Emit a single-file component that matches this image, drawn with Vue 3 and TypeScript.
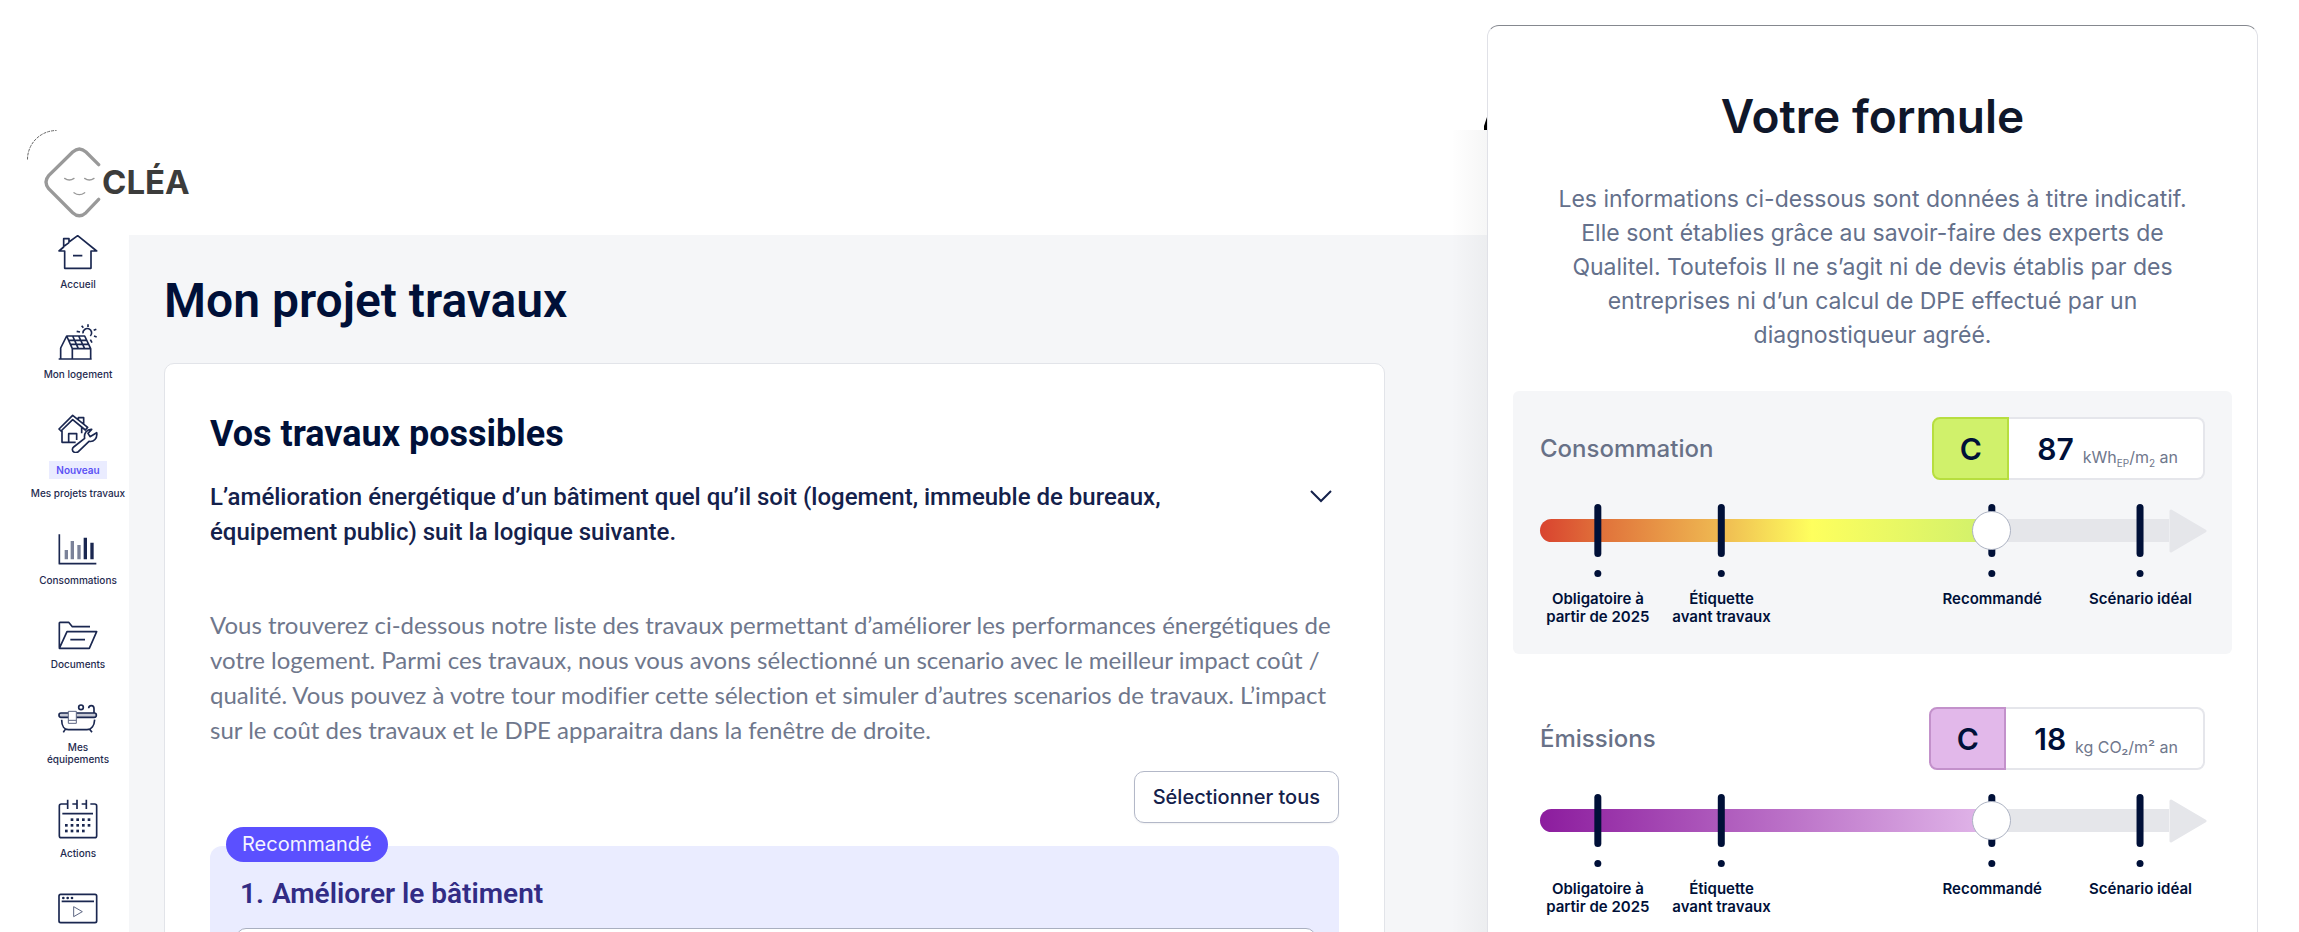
<script setup lang="ts">
import { ref } from 'vue'

interface Marker {
  at: number
  label: string
}

interface Gauge {
  id: string
  title: string
  grade: string
  value: number
  tone: 'green' | 'violet'
  muted: boolean
}

const markers: Marker[] = [
  { at: 8.7, label: 'Obligatoire à\npartir de 2025' },
  { at: 27.3, label: 'Étiquette\navant travaux' },
  { at: 68, label: 'Recommandé' },
  { at: 90.3, label: 'Scénario idéal' },
]

const gauges: Gauge[] = [
  { id: 'consommation', title: 'Consommation', grade: 'C', value: 87, tone: 'green', muted: true },
  { id: 'emissions', title: 'Émissions', grade: 'C', value: 18, tone: 'violet', muted: false },
]

const positions = ref<Record<string, number>>({ consommation: 69, emissions: 69 })

const calendarDots: [number, number][] = [
  ...[217, 234, 251, 268].map((x): [number, number] => [x, 506]),
  ...[200, 217, 234, 251, 268].map((x): [number, number] => [x, 523]),
  ...[200, 217, 234, 251].map((x): [number, number] => [x, 540]),
]
</script>

<template>
  <div class="page">
    <div class="window">
      <svg class="corner" viewBox="0 0 30 30" aria-hidden="true">
        <path d="M.5 29.5A29 29 0 0 1 29.5 .5" />
      </svg>
      <svg class="sliver" viewBox="0 0 3 13" aria-hidden="true"><path d="M3 0V13H0V9Z" /></svg>

      <header class="header">
        <a class="logo" href="#">
          <svg class="logo-mark" viewBox="132 108 171 216" aria-hidden="true">
            <path class="frame" d="M296 164L258 126Q238 108 218 126L146 197Q130 216 146 236L218 308Q238 326 258 308L296 268" />
            <path class="face" d="M194 205q14 10 28 0M254 205q14 10 28 0M222 248q16 12 32 0" />
          </svg>
          <span class="logo-name">CLÉA</span>
        </a>
      </header>

      <div class="columns">
        <nav class="sidebar">
          <a class="item" href="#">
            <svg class="icon" viewBox="175 375 120 105">
              <path d="M178 423L192 411V386H208V396L234 377L291 423H274V475H195V423ZM220 437H248M194 408L208 398" />
            </svg>
            <span class="label">Accueil</span>
          </a>
          <a class="item" href="#">
            <svg class="icon" viewBox="175 642 120 108">
              <path d="M177 747H276M183 747V714L201 678H255L273 716V747M218 747V716H273M201 678L218 716M207 691H261M212 703H267M219 678L236 716M237 678L255 716" />
              <path d="M250 670a13 13 0 1 1 22 8M265 643v8M246 647l5 6M290 658l-8 3M291 681l-8-3M231 664l10 2M277 698l-5-9" />
            </svg>
            <span class="label">Mon logement</span>
          </a>
          <a class="item" href="#">
            <svg class="icon" viewBox="175 102 120 117">
              <path d="M178 147L219 106L264 142L257 150L219 119L184 153ZM187 152V187H228M207 187V161H231V180M236 119V113H252V132M246 142V160" />
              <path class="paper" d="M224 217C216 213 217 205 222 201L255 175C252 160 262 147 276 148L265 160L271 170L291 158C294 175 282 187 268 184L240 211C236 217 230 219 224 217Z" />
            </svg>
            <span class="chip">Nouveau</span>
            <span class="label">Mes projets travaux</span>
          </a>
          <a class="item" href="#">
            <svg class="icon" viewBox="175 456 120 99">
              <path d="M179 460V548H290" />
              <path class="bar soft" d="M200 507V535M218 480V535M238 492V535" />
              <path class="bar" d="M257 470V535M277 485V535" />
            </svg>
            <span class="label">Consommations</span>
          </a>
          <a class="item" href="#">
            <svg class="icon" viewBox="175 717 120 90">
              <path d="M179 800V726Q179 724 181 724H207L218 737H271M179 802L202 752H291L269 802ZM212 776H256" />
            </svg>
            <span class="label">Documents</span>
          </a>
          <a class="item" href="#">
            <svg class="icon" viewBox="175 157 120 87">
              <rect class="rim" x="178" y="184" width="112" height="13" rx="6" />
              <path d="M186 204C186 224 195 234 206 234H262C275 234 284 222 285 204M196 234L191 242M271 234L277 242M283 184V171Q283 162 275 162Q267 162 267 170" />
              <rect class="paper thin" x="206" y="179" width="24" height="36" />
              <path class="thin" d="M206 206H230" />
              <circle cx="244" cy="167" r="7" />
            </svg>
            <span class="label">Mes<br>équipements</span>
          </a>
          <a class="item" href="#">
            <svg class="icon" viewBox="175 444 120 120">
              <path d="M194 459H185Q179 459 179 465V554Q179 560 185 560H285Q291 560 291 554V465Q291 459 285 459H272M204 446V474M232 446V474M260 446V474M194 459H204M218 459H232M246 459H260M188 488H280" />
              <rect v-for="([x, y], i) in calendarDots" :key="i" class="dot" :x="x - 4" :y="y - 4" width="8" height="8" />
            </svg>
            <span class="label">Actions</span>
          </a>
          <a class="item" href="#" aria-label="Vidéos">
            <svg class="icon" viewBox="175 724 120 93">
              <rect x="178" y="728" width="113" height="85" rx="5" />
              <path d="M186 749H283" />
              <path class="thin" d="M222 765V795L248 780Z" />
              <circle class="dot" cx="191" cy="739" r="4" />
              <circle class="dot" cx="204" cy="739" r="4" />
              <circle class="dot" cx="217" cy="739" r="4" />
            </svg>
          </a>
        </nav>

        <main class="main">
          <h1>Mon projet travaux</h1>
          <section class="card">
            <h2>Vos travaux possibles</h2>
            <div class="lead-row">
              <p class="lead">
                L’amélioration énergétique d’un bâtiment quel qu’il soit (logement, immeuble de bureaux,
                équipement public) suit la logique suivante.
              </p>
              <button class="toggle" type="button" aria-label="Déplier">
                <svg viewBox="0 0 24 16" aria-hidden="true"><path d="M2 3L12 13L22 3" /></svg>
              </button>
            </div>
            <p class="text">
              Vous trouverez ci-dessous notre liste des travaux permettant d’améliorer les performances
              énergétiques de votre logement. Parmi ces travaux, nous vous avons sélectionné un scenario avec le
              meilleur impact coût / qualité. Vous pouvez à votre tour modifier cette sélection et simuler
              d’autres scenarios de travaux. L’impact sur le coût des travaux et le DPE apparaitra dans la
              fenêtre de droite.
            </p>
            <button class="select-all" type="button">Sélectionner tous</button>
            <section class="group">
              <span class="badge">Recommandé</span>
              <h3><span>1.</span><span>Améliorer le bâtiment</span></h3>
              <div class="work"></div>
            </section>
          </section>
        </main>
      </div>
    </div>

    <aside class="panel">
      <h2 class="panel-title">Votre formule</h2>
      <p class="panel-text">
        Les informations ci-dessous sont données à titre indicatif. Elle sont établies grâce au savoir-faire des
        experts de Qualitel. Toutefois Il ne s’agit ni de devis établis par des entreprises ni d’un calcul de DPE
        effectué par un diagnostiqueur agréé.
      </p>

      <section v-for="g in gauges" :key="g.id" class="gauge" :class="[g.tone, { muted: g.muted }]">
        <div class="gauge-head">
          <label class="gauge-title" :for="g.id">{{ g.title }}</label>
          <div class="score">
            <strong class="grade">{{ g.grade }}</strong>
            <div class="measure">
              <strong class="number">{{ g.value }}</strong>
              <span v-if="g.tone === 'green'" class="unit">kWh<sub>EP</sub>/m<sub>2</sub> an</span>
              <span v-else class="unit">kg CO₂/m² an</span>
            </div>
          </div>
        </div>
        <div class="scale">
          <div class="track">
            <div class="rail"><div class="fill"></div></div>
            <svg class="arrow" viewBox="0 0 38 44" aria-hidden="true">
              <path d="M2 2L36 22L2 42Z" />
            </svg>
          </div>
          <div v-for="m in markers" :key="m.label" class="marker" :style="{ left: m.at + '%' }">
            <i class="tick"></i>
            <i class="point"></i>
            <span class="marker-label">{{ m.label }}</span>
          </div>
          <input :id="g.id" v-model.number="positions[g.id]" class="range" type="range" min="0" max="100">
        </div>
      </section>
    </aside>
  </div>
</template>

<style>
body {
  background: #fff;
}
</style>

<style scoped>
.page {
  box-sizing: border-box;
  display: flex;
  align-items: stretch;
  height: 100vh;
  overflow: hidden;
  padding: 25px 41px 0 27px;
  color: #001038;
  font-family: Inter, sans-serif;
}

h1, h2, h3, p {
  margin: 0;
}

a {
  color: inherit;
  text-decoration: none;
}

/* Application window */
.window {
  position: relative;
  display: flex;
  flex: 1;
  flex-direction: column;
  min-width: 0;
  margin-top: 105px;
}

.window::after {
  position: absolute;
  inset: 0 0 0 auto;
  width: 36px;
  background: linear-gradient(90deg, rgba(20, 24, 30, 0), rgba(20, 24, 30, 0.04));
  content: '';
  pointer-events: none;
}

.corner {
  position: absolute;
  top: 0;
  left: 0;
  width: 30px;
  fill: none;
  stroke: #666;
  stroke-dasharray: 3 1;
}

.sliver {
  position: absolute;
  top: -13px;
  right: 0;
  width: 3px;
}

.header {
  box-sizing: border-box;
  height: 105px;
  padding: 16px 17px;
}

.logo {
  display: inline-flex;
  gap: 1px;
  align-items: center;
}

.logo-mark {
  width: 57px;
  height: 72px;
  fill: none;
  stroke: #999;
  stroke-linecap: round;
}

.frame {
  stroke-width: 10;
}

.face {
  stroke-width: 4;
}

.logo-name {
  color: #3c3c3b;
  font-size: 33px;
  font-weight: 700;
  line-height: 40px;
}

.columns {
  display: flex;
  flex: 1;
}

.sidebar {
  display: flex;
  flex: 0 0 102px;
  flex-direction: column;
  gap: 34px;
}

.item {
  display: flex;
  flex-direction: column;
  gap: 8px;
  align-items: center;
}

.icon {
  width: 40px;
  fill: none;
  stroke: #1a2750;
  stroke-linejoin: round;
  stroke-width: 5;
}

.icon .thin {
  stroke: #5d6683;
  stroke-width: 3;
}

.icon .paper {
  fill: #fff;
}

.icon .rim {
  fill: #c6c9d4;
}

.icon .bar {
  stroke-width: 10;
}

.icon .soft {
  stroke: #7b8299;
}

.icon .dot {
  fill: #1a2750;
  stroke: none;
}

.label {
  color: #1f2b50;
  font-size: 10px;
  font-weight: 500;
  line-height: 12px;
  text-align: center;
  white-space: nowrap;
}

.chip {
  padding: 0 7px;
  background: #eaecff;
  color: #5a50f5;
  font-size: 10px;
  font-weight: 600;
  line-height: 18px;
}

.main {
  flex: 1;
  min-width: 0;
  padding: 38px 102px 0 35px;
  background: #f5f6f8;
  font-family: Roboto, sans-serif;
}

h1 {
  font-size: 48px;
  font-weight: 600;
  line-height: 56px;
}

.card {
  display: flex;
  flex-direction: column;
  height: 100%;
  margin-top: 34px;
  padding: 48px 45px 0;
  border: 1px solid #e2e4e9;
  border-radius: 10px;
  background: #fff;
}

.card h2 {
  font-size: 36px;
  font-weight: 700;
  line-height: 44px;
}

.lead-row {
  display: flex;
  gap: 48px;
  align-items: flex-start;
  justify-content: space-between;
  margin-top: 24px;
}

.lead {
  color: #14214b;
  font-size: 24px;
  font-weight: 500;
  line-height: 35px;
}

.toggle {
  padding: 8px 6px;
  border: 0;
  background: none;
}

.toggle svg {
  display: block;
  width: 24px;
  fill: none;
  stroke: #14214b;
  stroke-width: 2;
}

.text {
  margin-top: 57px;
  color: #6f778c;
  font-family: Lato, sans-serif;
  font-size: 24px;
  font-variant-ligatures: none;
  line-height: 35px;
}

.select-all {
  align-self: flex-end;
  height: 52px;
  margin-top: 24px;
  padding: 0 18px;
  border: 1px solid #b3b8c8;
  border-radius: 10px;
  background: #fff;
  color: #14214b;
  font-family: Inter, sans-serif;
  font-size: 20px;
  font-weight: 500;
  box-shadow: 0 1px 2px rgba(16, 24, 40, 0.06);
}

.group {
  position: relative;
  flex: 1;
  margin-top: 23px;
  padding: 30px 23px 0 26px;
  border-radius: 12px 12px 0 0;
  background: #eaecff;
}

.badge {
  position: absolute;
  top: -19px;
  left: 16px;
  padding: 0 16px;
  border-radius: 18px;
  background: #5b50ff;
  color: #f4f4ff;
  font-family: Inter, sans-serif;
  font-size: 20px;
  line-height: 35px;
}

.group h3 {
  display: flex;
  gap: 8px;
  padding-left: 4px;
  color: #322c85;
  font-size: 28px;
  font-weight: 600;
  line-height: 36px;
}

.work {
  height: 80px;
  margin-top: 16px;
  border: 1px solid #a9afc0;
  border-radius: 10px;
  background: #fff;
}

/* Summary panel */
.panel {
  box-sizing: border-box;
  display: flex;
  flex: 0 1 771px;
  flex-direction: column;
  align-items: stretch;
  padding: 62px 25px 0;
  border: 1px solid #e0e1e7;
  border-top-color: #85888f;
  border-bottom: 0;
  border-radius: 12px 12px 0 0;
  background: #fff;
}

.panel-title {
  color: #0f172a;
  font-size: 46px;
  font-weight: 600;
  line-height: 56px;
  text-align: center;
}

.panel-text {
  max-width: 650px;
  margin: 38px auto 39px;
  color: #64708b;
  font-size: 23px;
  line-height: 34px;
  text-align: center;
}

.gauge {
  margin-bottom: 27px;
  padding: 26px 27px 28px;
  border-radius: 6px;
}

.gauge.muted {
  background: #f5f6f8;
}

.gauge-head {
  display: flex;
  align-items: center;
  justify-content: space-between;
}

.gauge-title {
  color: #687187;
  font-size: 24px;
  font-weight: 500;
}

.score {
  display: flex;
  height: 63px;
}

.grade {
  box-sizing: border-box;
  display: grid;
  place-items: center;
  width: 77px;
  border: 2px solid;
  border-radius: 8px 0 0 8px;
  font-size: 30px;
  font-weight: 600;
}

.green .grade {
  border-color: #b7de3f;
  background: #d0f16b;
}

.violet .grade {
  border-color: #c391cb;
  background: #e2b8ea;
}

.measure {
  display: flex;
  gap: 9px;
  align-items: center;
  padding: 0 25px 0 28px;
  border: 2px solid #e5e6eb;
  border-left: 0;
  border-radius: 0 8px 8px 0;
  background: #fff;
}

.number {
  font-size: 30px;
  font-weight: 600;
}

.unit {
  margin-top: 16px;
  color: #6f778c;
  font-size: 16px;
  line-height: 20px;
}

.unit sub {
  font-size: 10px;
  line-height: 0;
}

.scale {
  position: relative;
  height: 122px;
  margin-top: 24px;
}

.track {
  display: flex;
  align-items: center;
  height: 53px;
  margin-right: -2px;
}

.rail {
  flex: 1;
  height: 23px;
  border-radius: 12px 0 0 12px;
  background: #e5e6ea;
}

.fill {
  width: 72%;
  height: 100%;
  border-radius: 12px 0 0 12px;
}

.green .fill {
  background: linear-gradient(90deg, #d9432f, #e0703a 13%, #efba52 40%, #feff5e 60%, #cff06c);
}

.violet .fill {
  background: linear-gradient(90deg, #8c1c9e, #e2b8ea);
}

.arrow {
  width: 38px;
  fill: #e5e6ea;
  stroke: #e5e6ea;
  stroke-linejoin: round;
  stroke-width: 3;
}

.marker {
  position: absolute;
  top: 0;
  display: flex;
  flex-direction: column;
  gap: 13px;
  align-items: center;
  transform: translateX(-50%);
}

.tick {
  width: 7px;
  height: 53px;
  border-radius: 4px;
  background: #001038;
}

.point {
  width: 7px;
  height: 7px;
  border-radius: 50%;
  background: #001038;
}

.marker-label {
  font-size: 15px;
  font-weight: 600;
  line-height: 18px;
  text-align: center;
  white-space: pre;
}

.range {
  position: absolute;
  top: 0;
  left: 0;
  width: 100%;
  height: 53px;
  margin: 0;
  appearance: none;
  background: none;
}

.range::-webkit-slider-thumb {
  box-sizing: border-box;
  width: 39px;
  height: 39px;
  border: 1px solid #adb3c3;
  border-radius: 50%;
  appearance: none;
  background: #fff;
}
</style>
